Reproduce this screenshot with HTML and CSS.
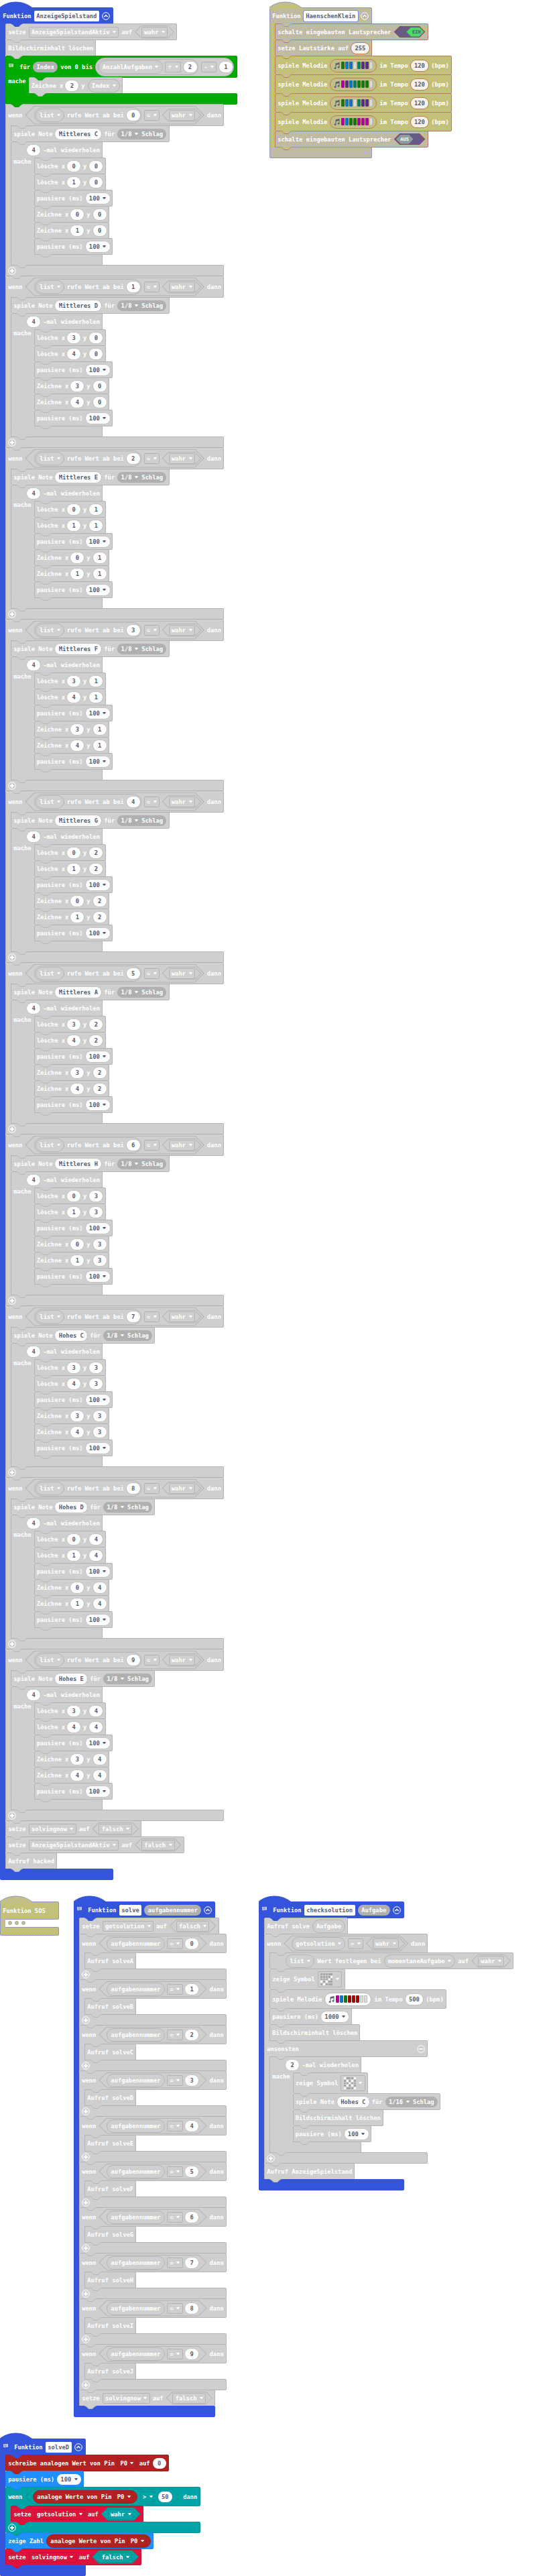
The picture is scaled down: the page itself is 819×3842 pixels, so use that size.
FILE: index.html
```html
<!DOCTYPE html>
<html lang="de">
<head>
<meta charset="utf-8">
<title>AnzeigeSpielstand</title>
<link rel="stylesheet" href="styles.css">
</head>
<body>
<main class="workspace">
  <section class="row row-one" id="row-one"></section>
  <section class="row row-two" id="row-two"></section>
  <section class="row row-three" id="row-three"></section>
</main>
<script src="blocks.js"></script>
</body>
</html>
```
FILE: styles.css
```css
* { box-sizing: border-box; }
body { margin: 0; background: #fff; }
.workspace {
  width: 819px;
  height: 3842px;
  overflow: hidden;
  font-family: "DejaVu Sans Mono", "Liberation Mono", monospace;
  font-size: 8.8px;
  font-weight: bold;
  line-height: 12px;
  color: #fff;
}
.row { display: grid; align-items: start; padding-top: 11px; white-space: nowrap; }
.row-one { height: 2825px; grid-template-columns: 402px 1fr; }
.row-two { height: 801px; grid-template-columns: 110px 276px 1fr; }
.row-three { height: 216px; }

/* colour themes */
.gray { --c: #cfcfcf; --bg: #cfcfcf; --s: #b4b4b4; }
.blue { --c: #3455db; --bg: #3455db; --s: #3455db; }
.green { --c: #00aa00; --bg: #00aa00; --s: #00a200; }
.red { --c: #b22222; --bg: #b22222; --s: #9f1e1e; }
.sky { --c: #1e90ff; --bg: #1e90ff; --s: #1b87ee; }
.teal { --c: #00a4a6; --bg: #00a4a6; --s: #009496; }
.crimson { --c: #dc143c; --bg: #dc143c; --s: #c41236; }
.olive {
  --c: #c2c088;
  --bg: repeating-linear-gradient(45deg, rgba(208,200,40,.75) 0 .8px, transparent .8px 2.83px),
        repeating-linear-gradient(-45deg, rgba(208,200,40,.75) 0 .8px, transparent .8px 2.83px), #bcbcac;
  --s: #8f98bb;
}
.olive .stmt { --s: #bf7a58; }

/* statements */
.stmt, .head, .foot {
  position: relative;
  display: flex;
  align-items: center;
  gap: 4px;
  width: max-content;
  height: 25px;
  margin-bottom: -1px;
  padding: 0 3.2px;
  background: var(--bg);
  border: 1px solid var(--s);
  border-radius: 2px;
  white-space: pre;
}
.h28 { height: 29px; }
.h31 { height: 32px; }
.h32 { height: 33px; }
.c-block { display: flex; flex-direction: column; width: max-content; }
.c-block > .head { width: auto; min-width: 100%; }
.c-block > .foot { width: 100%; height: 17px; padding-left: 3px; }
.mid { justify-content: space-between; }
.body { display: flex; width: 0; position: relative; }
.strip {
  position: relative;
  z-index: 1;
  flex: none;
  width: 8px;
  margin-bottom: -1px;
  background: var(--bg);
  border-left: 1px solid var(--s);
}
.strip.wide { width: 34.5px; padding: 0 0 0 3.2px; }
.stack { flex: none; position: relative; }
.lead { width: 16px; flex: none; }

/* connector tab */
.tab {
  position: absolute;
  z-index: 2;
  left: 7px;
  bottom: -6px;
  width: 18px;
  height: 6px;
  fill: var(--c);
  overflow: visible;
}
.tab .line { fill: none; stroke: var(--s); stroke-width: 1; }
.tab.at8 { left: 15px; }
.tab.at34 { left: 41.5px; }

/* function definitions */
.fn > .head { border-top-left-radius: 0; }
.hat {
  position: absolute;
  left: -1px;
  top: -9px;
  width: 49px;
  height: 10px;
  fill: var(--c);
  overflow: visible;
}
.hat .line { fill: none; stroke: var(--s); stroke-width: 1; }
.name {
  height: 16px;
  padding: 2px 3.7px;
  background: #fff;
  border-radius: 2px;
  color: #575e75;
}
.olive .name { outline: 1px solid #7d8ac6; }
.note { width: 7px; height: 6px; margin: -4px 5px 0 1px; flex: none; }
.ring { width: 12px; height: 12px; flex: none; }
.fn > .head > .ring { margin-right: .8px; }

/* fields */
.dd, .vr, .num, .pill, .melody, .symbol {
  flex: none;
  display: flex;
  align-items: center;
  justify-content: center;
  height: 16px;
}
.dd { padding: 0 3.2px 0 3.3px; border: 1px solid var(--s); border-radius: 2px; }
.caret { width: 5px; height: 3.4px; margin-left: 4.5px; fill: currentColor; flex: none; }
.vr { height: 20px; padding: 0 5.2px; border: 1px solid var(--s); border-radius: 10px; background: var(--bg); }
.num {
  min-width: 20px;
  padding: 0 5.3px;
  border-radius: 8px;
  background: #fff;
  color: #575e75;
  box-shadow: 0 0 0 .6px var(--s);
}
.olive .num { background: #f4f3ea; box-shadow: 0 0 0 1px var(--s); }
.pill { padding: 0 5.4px; border-radius: 8px; background: #b0b0b0; }
.tight { margin-left: -1px; }

.hex, .toggle, .knob {
  --cap: calc(var(--h) / 2);
  flex: none;
  position: relative;
  isolation: isolate;
  display: flex;
  align-items: center;
  gap: 3.6px;
  height: var(--h);
  background: var(--s);
  clip-path: polygon(var(--cap) 0, calc(100% - var(--cap)) 0, 100% 50%, calc(100% - var(--cap)) 100%, var(--cap) 100%, 0 50%);
}
.hex::before, .toggle::before {
  --cap2: calc(var(--cap) - 1px);
  content: "";
  position: absolute;
  z-index: -1;
  inset: 1px 1.4px;
  background: var(--c);
  clip-path: polygon(var(--cap2) 0, calc(100% - var(--cap2)) 0, 100% 50%, calc(100% - var(--cap2)) 100%, var(--cap2) 100%, 0 50%);
}
.hex20 { --h: 20px; padding: 0 9.9px; }
.hex24 { --h: 24px; padding: 0 12.4px 0 11.8px; }
.hex24.end-hex { padding-right: 4.3px; }
.hex28 { --h: 28px; padding: 0 4.2px 0 13.8px; }
.round {
  flex: none;
  display: flex;
  align-items: center;
  gap: 3.8px;
  border: 1px solid var(--s);
  border-radius: 14px;
  background: var(--bg);
}
.round24 { height: 24px; padding: 0 1.6px 0 1px; }
.round28 { height: 28px; padding: 0 1.4px 0 1.6px; }
.round20 { height: 20px; padding: 0 5.2px; }

/* speaker toggles */
.toggle { --h: 17px; width: 46.7px; background: #a5424a; }
.toggle::before { background: #665c82; }
.toggle.on { justify-content: flex-end; padding-right: 2px; }
.toggle.off { padding-left: 3px; }
.knob { --h: 14px; width: 26px; justify-content: center; font-size: 7px; background: #8e9c9c; }
.on .knob { background: #4cd964; color: #47606a; padding-left: 4px; }

/* melody */
.melody { width: 70px; height: 20px; border: 1px solid var(--s); border-radius: 10px; background: var(--c); gap: 1px; }
.melody.light { background: #fff; }
.bar { width: 5px; height: 10.5px; border-radius: 1.4px; box-shadow: inset 0 0 0 .6px rgba(80,80,80,.35); }
.music { width: 9px; height: 10px; margin-right: 1px; fill: #575e75; }
.b-g { background: #107c10; }
.b-b { background: #0078d7; }
.b-t { background: #008272; }
.b-v { background: #5c2d91; }
.b-m { background: #b4009e; }
.b-r { background: #a80000; }
.b-n { background: #dcdcdc; }

/* led matrix picker */
.symbol { width: 36.7px; height: 23.4px; border: 1px solid var(--s); border-radius: 2px; }
.leds { display: grid; grid-template-columns: repeat(5, 3px); gap: .7px; }
.led { height: 2.9px; background: #a6a6a6; border-radius: .5px; }
.led.lit { background: #fff; }

/* collapsed function */
.sos .head { width: 88px; height: 27px; }
.sos .foot { width: 88px; height: 13px; }
.dots { display: flex; gap: 4px; align-items: center; height: 12px; padding-left: 4px; }
.dot { width: 6px; height: 6px; border-radius: 50%; background: #c2c088; border: 1px solid #aaac98; }
```
FILE: blocks.js
```javascript
const CARET = '<svg class="caret" viewBox="0 0 10 7"><path d="M1 0h8q1.4.3.6 1.4L6 6q-1 1-2 0L.4 1.4Q-.4.3 1 0z"/></svg>';
const tab = (cls = '') =>
  `<svg class="tab ${cls}" viewBox="0 0 18 6"><path d="M0 0H18V.5H17C16 .5 15.5 1 15 1.5L13 3.5C12.5 4 12 4.5 11 4.5H7C6 4.5 5.5 4 5 3.5L3 1.5C2.500 1 2 .5 1 .5H0Z"/><path class="line" d="M1 .5C2 .5 2.500 1 3 1.500L5 3.500C5.500 4 6 4.500 7 4.500H11C12 4.500 12.500 4 13 3.500L15 1.500C15.500 1 16 .5 17 .5"/></svg>`;
const HAT = '<svg class="hat" viewBox="0 0 49 10"><path d="M0 10V8C14-2.700 34-2.700 48 8.800V10Z"/><path class="line" d="M.5 9V7.700C14-2.600 34-2.600 48 8.500"/></svg>';
const ring = inner => `<svg class="ring" viewBox="0 0 12 12" fill="none" stroke="#fff"><circle cx="6" cy="6" r="5.300"/>${inner}</svg>`;
const UP = ring('<path d="M3.300 7.300L6 4.700L8.700 7.300" stroke-width="1.500"/>');
const PLUS = ring('<path d="M6 3V9M3 6H9" stroke-width="2"/>');
const MINUS = ring('<path d="M3 6H9" stroke-width="1.600"/>');
const NOTE = '<svg class="note" viewBox="0 0 7 6" opacity=".7"><path fill="#fff" d="M0 0H7V4.800H3L1.500 6V4.800H0Z"/><path stroke="#777" stroke-width=".7" d="M1.300 1.600H5.700M1.300 3.200H4.500"/></svg>';
const MUSIC = '<svg class="music" viewBox="0 0 18 20"><path d="M5 3L17 0V14.500A3 2.500 0 1 1 15 12.300V6L7 8V17.300A3 2.500 0 1 1 5 15Z"/></svg>';
const LEAD = '<span class="lead"></span>';

const t = s => `<span>${s}</span>`;
const dd = s => `<span class="dd">${s}${CARET}</span>`;
const vr = s => `<span class="vr">${s}${CARET}</span>`;
const vl = s => `<span class="vr">${s}</span>`;
const num = (s, cls = '') => `<span class="num ${cls}">${s}</span>`;
const numdd = s => `<span class="num">${s}${CARET}</span>`;
const pill = s => `<span class="pill">${s}</span>`;
const hex = (size, s, cls = '') => `<span class="hex hex${size} ${cls}">${s}</span>`;
const round = (size, s, cls = '') => `<span class="round round${size} ${cls}">${s}</span>`;
const bool = (s, cls) => hex(20, dd(s), cls);
const gray = s => `<div class="gray">${s}</div>`;

const stmt = (s, cls = '') => `<div class="stmt ${cls}">${s}${tab()}</div>`;
const head = (s, cls, tabCls) => `<div class="head ${cls}">${s}${tab(tabCls)}</div>`;
const body = (items, label = '') =>
  `<div class="body"><div class="strip ${label ? 'wide' : ''}">${label}</div><div class="stack">${items.join('')}</div></div>`;
const when = (cond, items, size = 'h28', cls = '', extra = '') =>
  `<div class="c-block ${cls}">${head(t('wenn') + cond + t('dann'), size, 'at8')}${body(items)}${extra}<div class="foot">${PLUS}${tab()}</div></div>`;
const loop = (header, items, size = '') =>
  `<div class="c-block">${head(header, size, 'at34')}${body(items, 'mache')}<div class="foot">${tab()}</div></div>`;
const repeat = (n, items) => loop(LEAD + num(n) + t('-mal wiederholen'), items);
const fn = (cls, header, items) =>
  `<div class="c-block fn ${cls}">${head(HAT + header + UP, '', 'at8')}${body(items)}<div class="foot"></div></div>`;
const name = s => `<span class="name">${s}</span>`;

const set = (v, val, cls = 'gray', valCls = '') => stmt(t('setze') + dd(v) + t('auf') + bool(val, valCls), cls);
const clear = stmt(t('Bildschirminhalt löschen'));
const pause = (n, cls) => stmt(t('pausiere (ms)') + numdd(n), cls);
const unplot = (x, y) => stmt(t('lösche x') + num(x, 'tight') + t('y') + num(y));
const plot = (x, y) => stmt(t('Zeichne x') + num(x, 'tight') + t('y') + num(y));
const play = (n, beat) => stmt(t('spiele Note') + num(n) + t('für') + pill(beat + CARET + ' Schlag'));
const melody = (bars, tempo, cls = '') =>
  stmt(t('spiele Melodie') + `<span class="melody ${cls}">${MUSIC}${[...bars].map(b => `<i class="bar b-${b}"></i>`).join('')}</span>` +
    t('im Tempo') + num(tempo) + t('(bpm)'), 'h28');
const symbol = rows =>
  stmt(t('zeige Symbol') + `<span class="symbol"><span class="leds">${[...rows].map(c => `<i class="led ${c === '#' ? 'lit' : ''}"></i>`).join('')}</span>${CARET}</span>`, 'h31');

const notes = ['Mittleres C', 'Mittleres D', 'Mittleres E', 'Mittleres F', 'Mittleres G', 'Mittleres A', 'Mittleres H', 'Hohes C', 'Hohes D', 'Hohes E'];
const scoreGroup = (note, i) => {
  const y = Math.floor(i / 2);
  const [a, b] = i % 2 ? [3, 4] : [0, 1];
  return when(
    hex(28, round(24, vr('list') + t('rufe Wert ab bei') + num(i)) + dd('=') + bool('wahr')),
    [play(note, '1/8'), repeat(4, [unplot(a, y), unplot(b, y), pause(100), plot(a, y), plot(b, y), pause(100)])],
    'h32'
  );
};

const forLoop = '<div class="green">' + loop(
  NOTE + t('für') + pill('Index') + t('von 0 bis') +
    round(28, round(24, vr('AnzahlAufgaben') + dd('÷') + num(2)) + dd('-') + num(1), 'gray'),
  [gray(stmt(t('Zeichne x') + num(2, 'tight') + t('y') + vr('Index')))], 'h32') + '</div>';

document.getElementById('row-one').innerHTML =
  fn('blue', t('Funktion') + name('AnzeigeSpielstand'), [
    set('AnzeigeSpielstandAktiv', 'wahr'),
    gray(clear),
    forLoop,
    gray(notes.map(scoreGroup).join('')),
    set('solvingnow', 'falsch'),
    set('AnzeigeSpielstandAktiv', 'falsch'),
    stmt(t('Aufruf hacked'), 'gray')
  ]) +
  fn('olive', t('Funktion') + name('HaenschenKlein'), [
    stmt(t('schalte eingebauten Lautsprecher') + '<span class="toggle on"><span class="knob">EIN</span></span>'),
    stmt(t('setze Lautstärke auf') + num(255)),
    melody('gbbntvvn', 120),
    melody('mvbtgggn', 120),
    melody('gbbntvvn', 120),
    melody('mbggmmmn', 120),
    stmt(t('schalte eingebauten Lautsprecher') + '<span class="toggle off"><span class="knob">AUS</span></span>')
  ]);

document.getElementById('row-two').innerHTML =
  `<div class="sos olive"><div class="head">${HAT}${t('Funktion SOS')}</div>` +
  '<div class="body"><div class="strip"></div><div class="dots"><i class="dot"></i><i class="dot"></i><i class="dot"></i></div></div><div class="foot"></div></div>' +
  fn('blue', NOTE + t('Funktion') + name('solve') + pill('aufgabennummer'), [
    set('gotsolution', 'falsch'),
    gray([...'ABCDEFGHIJ'].map((c, i) =>
      when(hex(24, vl('aufgabennummer') + dd('=') + num(i)), [stmt(t('Aufruf solve' + c))])).join('')),
    set('solvingnow', 'falsch')
  ]) +
  fn('blue', NOTE + t('Funktion') + name('checksolution') + pill('Aufgabe'), [
    gray(
      stmt(t('Aufruf solve') + vl('Aufgabe')) +
      when(hex(24, vr('gotsolution') + dd('=') + bool('wahr'), 'end-hex'), [
        stmt(LEAD + vr('list') + t('Wert festlegen bei') + vr('momentaneAufgabe') + t('auf') + bool('wahr')),
        symbol('.........#...#.#.#...#...'),
        melody('mbgrrrnn', 500, 'light'),
        pause(1000),
        clear
      ], 'h28', '', `<div class="head mid">${t('ansonsten')}${MINUS}${tab('at8')}</div>` +
        body([repeat(2, [symbol('#...#.#.#...#...#.#.#...#'), play('Hohes C', '1/16'), clear, pause(100)])])) +
      stmt(t('Aufruf AnzeigeSpielstand')))
  ]);

document.getElementById('row-three').innerHTML =
  fn('blue', NOTE + t('Funktion') + name('solveD'), [
    stmt(t('schreibe analogen Wert von Pin') + dd('P0') + t('auf') + num(0), 'red'),
    pause(100, 'sky'),
    when(hex(24, round(20, t('analoge Werte von Pin') + dd('P0'), 'red') + dd('&gt;') + num(50)),
      [set('gotsolution', 'wahr', 'crimson', 'teal')], 'h28', 'teal'),
    stmt(t('zeige Zahl') + round(20, t('analoge Werte von Pin') + dd('P0'), 'red'), 'sky'),
    set('solvingnow', 'falsch', 'crimson', 'teal')
  ]);
```
